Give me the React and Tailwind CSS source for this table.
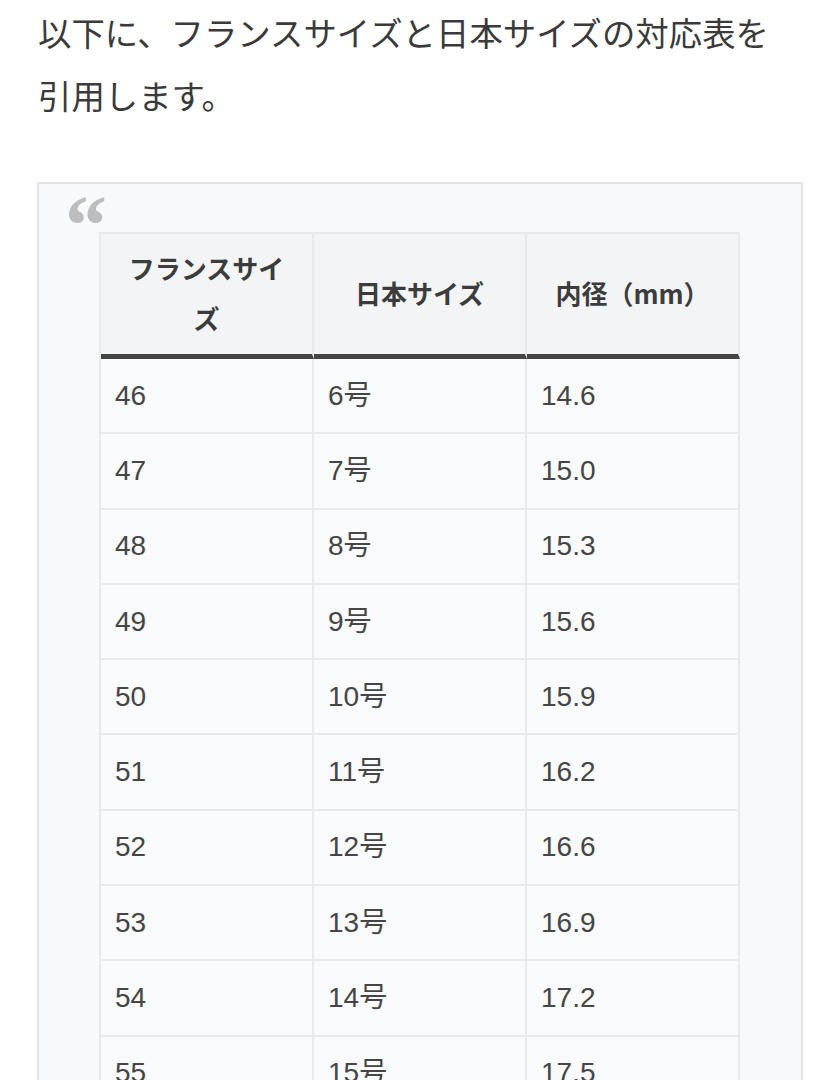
import React from "react";

const rows = [
  ["46", "6号", "14.6"],
  ["47", "7号", "15.0"],
  ["48", "8号", "15.3"],
  ["49", "9号", "15.6"],
  ["50", "10号", "15.9"],
  ["51", "11号", "16.2"],
  ["52", "12号", "16.6"],
  ["53", "13号", "16.9"],
  ["54", "14号", "17.2"],
  ["55", "15号", "17.5"],
];

export default function App() {
  return (
    <div className="min-h-[1080px] bg-white px-[37px] font-['Liberation_Sans','Noto_Sans_CJK_JP',sans-serif] text-[#444]">
      <p className="w-[745px] pl-px font-['Noto_Sans_CJK_JP',sans-serif] text-[33.4px] leading-[63px] text-[#3a3a3a]">
        以下に、フランスサイズと日本サイズの対応表を引用します。
      </p>
      <div className="relative mt-[56px] border-2 border-[#e4e4e4] bg-[#f8f9fb] pl-[60px] pr-[60px] pt-[48px] pb-10">
        <span className="absolute left-[26px] top-0 font-['Liberation_Serif',serif] text-[84px] font-bold leading-none text-[#bdbdbd]">
          “
        </span>
        <div className="grid w-[641px] grid-cols-3 border-l-2 border-t-2 border-[#e8e9eb]">
          {["フランスサイズ", "日本サイズ", "内径（mm）"].map((h) => (
            <div
              key={h}
              className="flex h-[125px] items-center justify-center border-r-2 border-r-[#e8e9eb] border-b-[5px] border-b-[#444] bg-[#f3f4f6] px-5 pb-[3px] text-center font-['Noto_Sans_CJK_JP',sans-serif] text-[26px] font-bold leading-[50px] text-[#3c3c3c]"
            >
              {h}
            </div>
          ))}
          {rows.map((r) =>
            r.map((c, i) => (
              <div
                key={r[0] + "-" + i}
                className="flex h-[75.3px] items-center border-b-2 border-r-2 border-[#e8e9eb] bg-[#f9fafb] pl-[14px] text-[28px] text-[#454545]"
              >
                {c}
              </div>
            ))
          )}
        </div>
      </div>
    </div>
  );
}
